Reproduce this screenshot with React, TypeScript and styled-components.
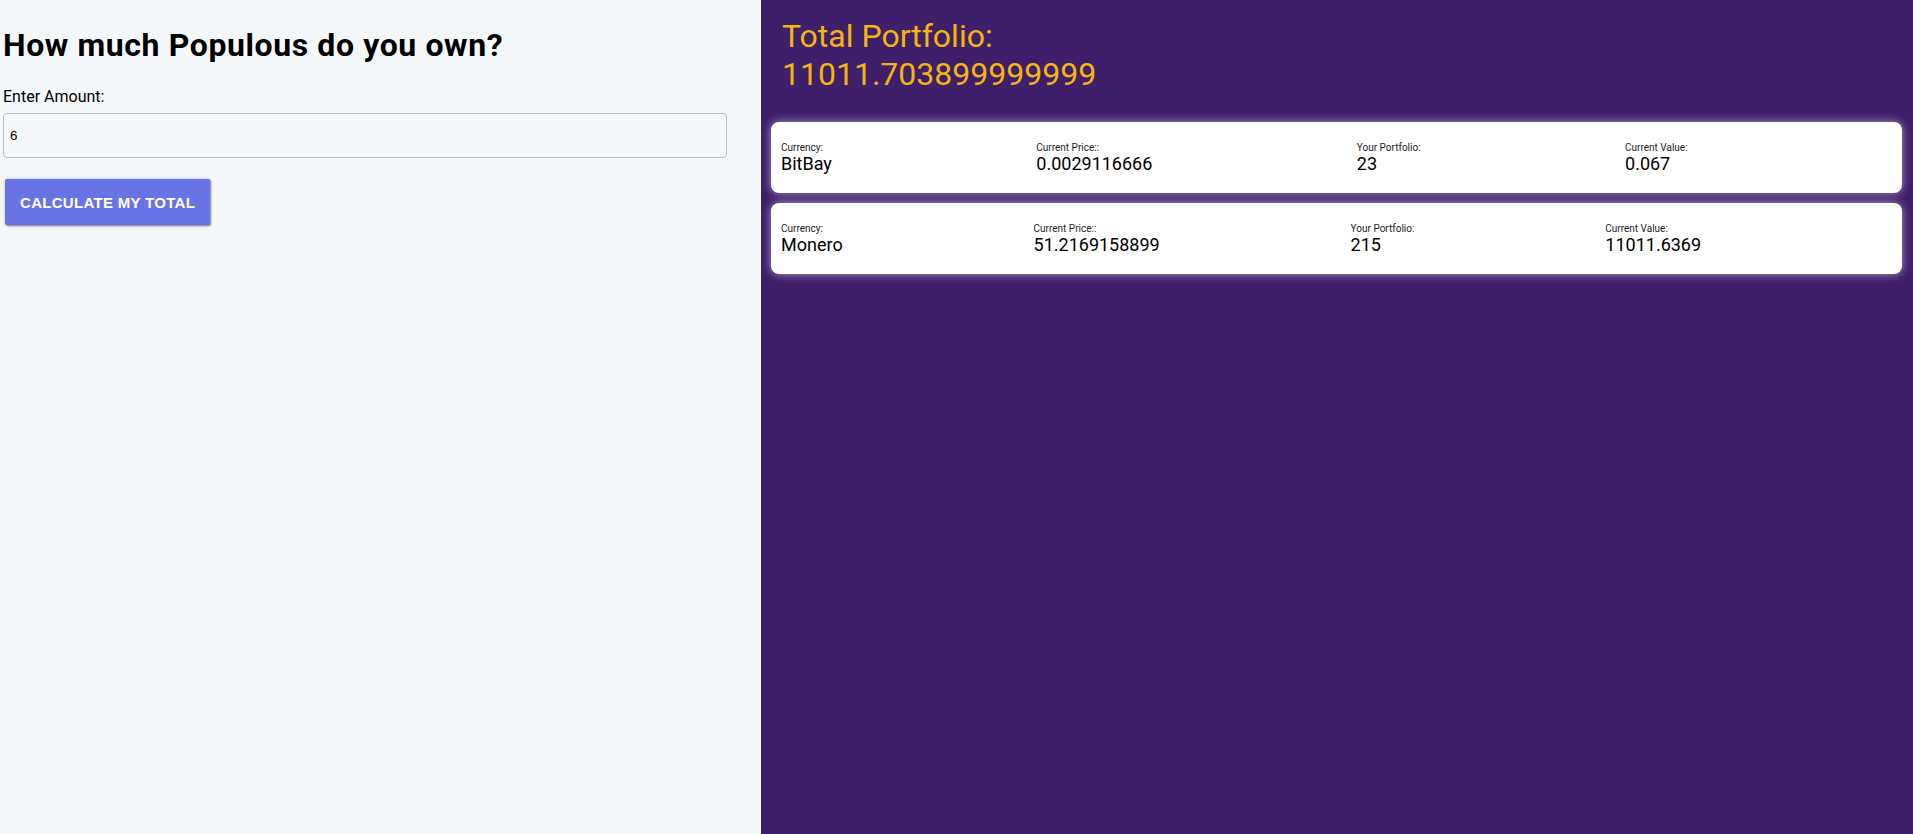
import styled, { createGlobalStyle } from "styled-components";
import { useState } from "react";

const GlobalStyle = createGlobalStyle`
  html, body {
    margin: 0;
    padding: 0;
  }
  body {
    font-family: Roboto, "Liberation Sans", sans-serif;
    color: #000;
  }
`;

const Page = styled.div`
  display: grid;
  grid-template-columns: 761px 1fr;
  min-height: 100vh;
`;

const LeftPanel = styled.section`
  background-color: #f5f8fb;
  padding: 0 3px;
  display: flex;
  flex-direction: column;
  align-items: flex-start;
`;

const Heading = styled.h1`
  font-size: 32px;
  font-weight: 700;
  letter-spacing: 0.6px;
  margin: 26px 0 23px 0;
  line-height: normal;
`;

const Label = styled.label`
  font-size: 16px;
  margin-bottom: 7px;
`;

const AmountInput = styled.input`
  box-sizing: border-box;
  width: 724px;
  height: 45px;
  padding: 0 6px;
  border: 1px solid #b9bdc2;
  border-radius: 4px;
  background-color: #f5f8fb;
  font-family: "Liberation Sans", Arial, sans-serif;
  font-size: 13.33px;
  color: #000;
  outline: none;
`;

const CalcButton = styled.button`
  margin-top: 21px;
  margin-left: 2px;
  height: 46px;
  padding: 0 15px;
  border: none;
  border-radius: 2px;
  background-color: #6873e5;
  color: #fff;
  font-family: "Liberation Sans", Arial, sans-serif;
  font-weight: 700;
  font-size: 15px;
  letter-spacing: 0.3px;
  text-transform: uppercase;
  box-shadow: 1px 1px 2px rgba(0, 0, 0, 0.45), 0 0 4px rgba(0, 0, 0, 0.15);
  cursor: pointer;
`;

const RightPanel = styled.section`
  background-color: #3e1f6a;
  padding: 17px 11px 10px 10px;
`;

const Total = styled.h2`
  margin: 0 0 29px 0;
  padding-left: 11px;
  font-size: 32px;
  font-weight: 400;
  line-height: normal;
  color: #f6b40f;
`;

const CardList = styled.div`
  display: flex;
  flex-direction: column;
  gap: 10px;
`;

const Card = styled.div`
  display: flex;
  background-color: #fff;
  border-radius: 8px;
  padding: 20px 10px 19px 10px;
  box-shadow: 0 0 10px rgba(255, 255, 255, 0.55);
`;

const Field = styled.div`
  flex: 1 1 auto;
  display: flex;
  flex-direction: column;
`;

const FieldLabel = styled.span`
  font-size: 10px;
  color: #222;
`;

const FieldValue = styled.span`
  font-size: 18px;
  color: #000;
`;

interface Holding {
  name: string;
  price: string;
  amount: string;
  value: string;
}

const holdings: Holding[] = [
  { name: "BitBay", price: "0.0029116666", amount: "23", value: "0.067" },
  { name: "Monero", price: "51.2169158899", amount: "215", value: "11011.6369" },
];

function App() {
  const [amount, setAmount] = useState("6");
  return (
    <>
      <GlobalStyle />
      <Page>
        <LeftPanel>
          <Heading>How much Populous do you own?</Heading>
          <Label htmlFor="amount">Enter Amount:</Label>
          <AmountInput
            id="amount"
            value={amount}
            onChange={(e) => setAmount(e.target.value)}
          />
          <CalcButton>Calculate my total</CalcButton>
        </LeftPanel>
        <RightPanel>
          <Total>
            Total Portfolio:
            <br />
            11011.703899999999
          </Total>
          <CardList>
            {holdings.map((h) => (
              <Card key={h.name}>
                <Field>
                  <FieldLabel>Currency:</FieldLabel>
                  <FieldValue>{h.name}</FieldValue>
                </Field>
                <Field>
                  <FieldLabel>Current Price::</FieldLabel>
                  <FieldValue>{h.price}</FieldValue>
                </Field>
                <Field>
                  <FieldLabel>Your Portfolio:</FieldLabel>
                  <FieldValue>{h.amount}</FieldValue>
                </Field>
                <Field>
                  <FieldLabel>Current Value:</FieldLabel>
                  <FieldValue>{h.value}</FieldValue>
                </Field>
              </Card>
            ))}
          </CardList>
        </RightPanel>
      </Page>
    </>
  );
}

export default App;
